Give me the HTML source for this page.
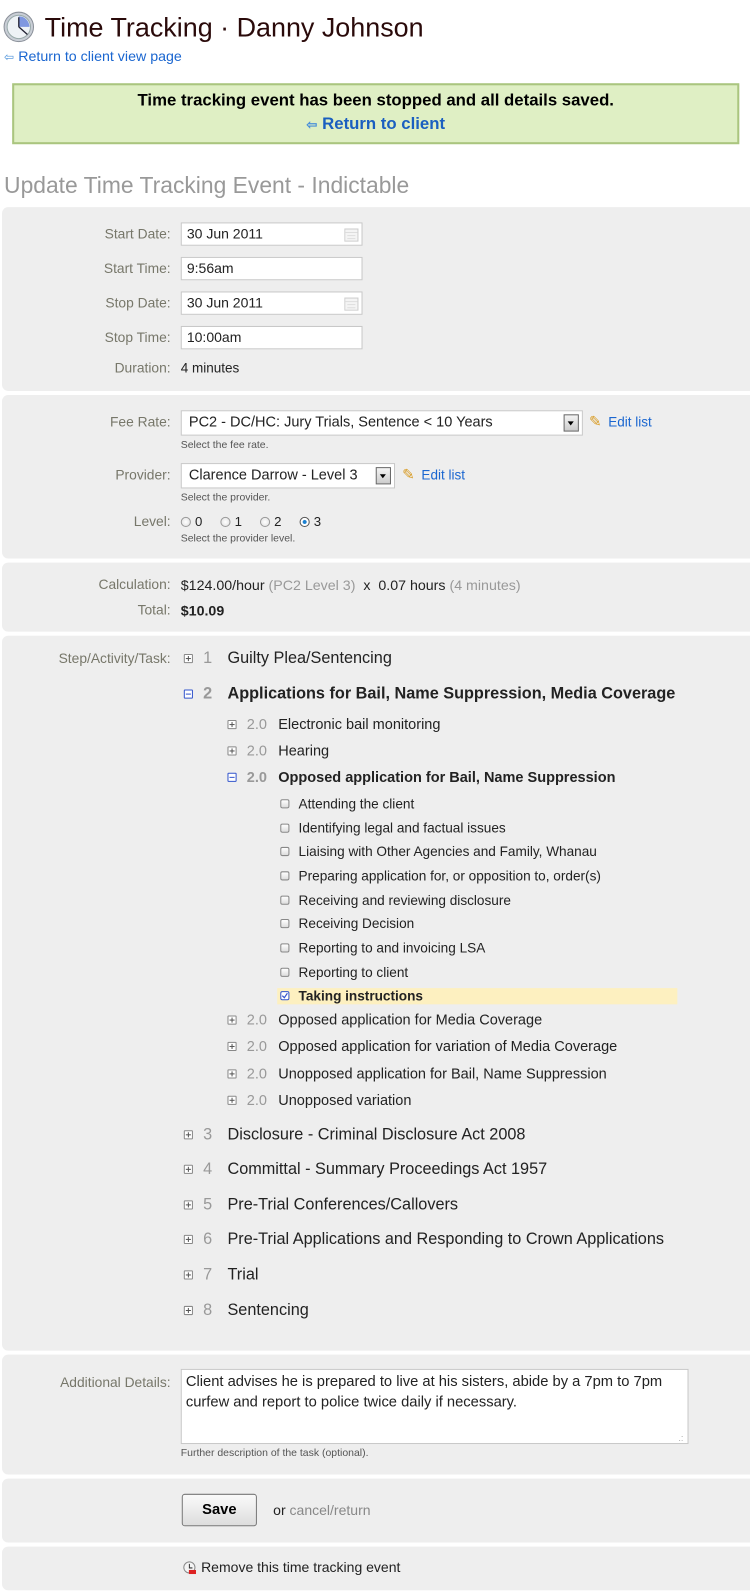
<!DOCTYPE html>
<html><head><meta charset="utf-8">
<style>
html,body{margin:0;padding:0;background:#fff;width:750px;height:1592px;overflow:hidden}
#w{position:absolute;left:0;top:0;width:739px;height:1568px;transform:scale(1.0155);transform-origin:0 0;font-family:"Liberation Sans",Arial,sans-serif;font-size:13px;color:#222}
.a{position:absolute;white-space:nowrap;line-height:20px}
.p{position:absolute;left:2px;width:760px;background:#eeeeee;border-radius:6px}
.lab{position:absolute;right:571px;color:#77776a;line-height:20px;white-space:nowrap;text-align:right;font-size:13.6px}
.inp{position:absolute;left:178px;width:179px;height:23px;background:#fff;border:1px solid #c8c8c8;box-sizing:border-box;padding-left:5px;line-height:21px;font-size:13.8px}
.help{position:absolute;left:178px;font-size:10.3px;color:#555;line-height:12px}
.sel{position:absolute;left:178px;height:25px;background:#fff;border:1px solid #c8c8c8;box-sizing:border-box;padding-left:7px;line-height:23px;font-size:14.3px}
.dd{position:absolute;right:3px;top:3px;width:13px;height:15px;border:1px solid #666;background:linear-gradient(#f4f4f4,#ccc)}
.dd:after{content:"";position:absolute;left:3px;top:6px;border-left:3.5px solid transparent;border-right:3.5px solid transparent;border-top:4px solid #000}
.link{color:#1a66d0}
.pl,.mi{position:absolute;width:7px;height:7px;border:1px solid #888;border-radius:1px;background:#fff}
.pl:before,.mi:before{content:"";position:absolute;left:1px;top:3px;width:5px;height:1px;background:#555}
.pl:after{content:"";position:absolute;left:3px;top:1px;width:1px;height:5px;background:#555}
.mi{border-color:#3355cc}.mi:before{background:#3355cc}
.cb{position:absolute;width:7px;height:7px;border:1px solid #888;border-radius:2px;background:linear-gradient(#fff,#ddd)}
.n{color:#999}
.r{position:absolute;width:10px;height:10px;border-radius:50%;border:1px solid #999;background:radial-gradient(#fff,#ddd);box-sizing:border-box}
.l1{font-size:16px}.l2{font-size:14.3px}.l3{font-size:13.4px}
</style></head><body><div id="w">
<svg style="position:absolute;left:3px;top:11px" width="31" height="31" viewBox="0 0 31 31"><circle cx="15.5" cy="15.5" r="14.5" fill="#c9ced6" stroke="#8a9099"/><circle cx="15.5" cy="15.5" r="11.5" fill="#eef2f6" stroke="#9aa"/><path d="M15.5 15.5 L15.5 5 A10.5 10.5 0 0 1 26 15.5 Z" fill="#7f97e0"/><path d="M15.5 15.5 L15.5 6 M15.5 15.5 L24 23" stroke="#223" stroke-width="1.3"/></svg>
<div class="a" style="left:44px;top:10px;font-size:26.5px;line-height:34px;color:#2a0a0a">Time Tracking · Danny Johnson</div>
<div class="a" style="left:4px;top:45px;font-size:14px"><span style="color:#4a90d9;font-size:12px">⇦</span> <span class="link">Return to client view page</span></div>
<div style="position:absolute;left:12px;top:82px;width:716px;height:60px;box-sizing:border-box;border:2px solid #aac57f;background:#dfefc4"></div>
<div class="a" style="left:12px;width:716px;text-align:center;top:89px;font-weight:bold;font-size:16.5px;color:#000">Time tracking event has been stopped and all details saved.</div>
<div class="a" style="left:12px;width:716px;text-align:center;top:112px;font-weight:bold;font-size:16.5px;color:#1a5fc0"><span style="color:#4a90d9;font-size:13px">⇦</span> Return to client</div>
<div class="a" style="left:4px;top:170px;font-size:22.5px;line-height:26px;color:#999">Update Time Tracking Event - Indictable</div>

<div class="p" style="top:204px;height:181px"></div>
<div class="p" style="top:389px;height:161px"></div>
<div class="p" style="top:554px;height:68px"></div>
<div class="p" style="top:626px;height:704px"></div>
<div class="p" style="top:1334px;height:118px"></div>
<div class="p" style="top:1456px;height:63px"></div>
<div class="p" style="top:1523px;height:43px"></div>

<div class="lab" style="top:221px">Start Date:</div><div class="inp" style="top:219px">30 Jun 2011<svg style="position:absolute;right:3px;top:3px" width="14" height="15"><rect x="0.5" y="2.5" width="13" height="12" fill="#f4f4f4" stroke="#ccc"/><path d="M1 6h12M3 9h8M3 12h8" stroke="#ddd"/></svg></div>
<div class="lab" style="top:255px">Start Time:</div><div class="inp" style="top:253px">9:56am</div>
<div class="lab" style="top:289px">Stop Date:</div><div class="inp" style="top:287px">30 Jun 2011<svg style="position:absolute;right:3px;top:3px" width="14" height="15"><rect x="0.5" y="2.5" width="13" height="12" fill="#f4f4f4" stroke="#ccc"/><path d="M1 6h12M3 9h8M3 12h8" stroke="#ddd"/></svg></div>
<div class="lab" style="top:323px">Stop Time:</div><div class="inp" style="top:321px">10:00am</div>
<div class="lab" style="top:353px">Duration:</div><div class="a" style="left:178px;top:353px;font-size:13.3px">4 minutes</div>

<div class="lab" style="top:406px">Fee Rate:</div>
<div class="sel" style="top:404px;width:396px">PC2 - DC/HC: Jury Trials, Sentence &lt; 10 Years<div class="dd"></div></div>
<div class="a" style="left:580px;top:406px;font-size:15px;color:#d89a20">✎</div><div class="a link" style="left:599px;top:406px;font-size:13.3px">Edit list</div>
<div class="help" style="top:433px">Select the fee rate.</div>
<div class="lab" style="top:458px">Provider:</div>
<div class="sel" style="top:456px;width:211px">Clarence Darrow - Level 3<div class="dd"></div></div>
<div class="a" style="left:396px;top:458px;font-size:15px;color:#d89a20">✎</div><div class="a link" style="left:415px;top:458px;font-size:13.3px">Edit list</div>
<div class="help" style="top:485px">Select the provider.</div>
<div class="lab" style="top:504px">Level:</div>
<div class="r" style="left:178px;top:509px"></div><div class="a" style="left:192px;top:504px">0</div>
<div class="r" style="left:217px;top:509px"></div><div class="a" style="left:231px;top:504px">1</div>
<div class="r" style="left:256px;top:509px"></div><div class="a" style="left:270px;top:504px">2</div>
<div class="r" style="left:295px;top:509px;border-color:#555;background:radial-gradient(#1a80d0 30%,#fff 40%)"></div><div class="a" style="left:309px;top:504px">3</div>
<div class="help" style="top:525px">Select the provider level.</div>

<div class="lab" style="top:566px">Calculation:</div><div class="a" style="left:178px;top:566px;font-size:14px">$124.00/hour <span class="n">(PC2 Level 3)</span>&nbsp; x&nbsp; 0.07 hours <span class="n">(4 minutes)</span></div>
<div class="lab" style="top:591px">Total:</div><div class="a" style="left:178px;top:591px;font-weight:bold;font-size:14px">$10.09</div>

<div class="lab" style="top:639px">Step/Activity/Task:</div>
<div class="pl" style="left:181px;top:644px"></div><div class="a l1 n" style="left:200px;top:639px">1</div><div class="a l1" style="left:224px;top:639px">Guilty Plea/Sentencing</div>
<div class="mi" style="left:181px;top:679px"></div><div class="a l1 n" style="left:200px;top:674px;font-weight:bold">2</div><div class="a l1" style="left:224px;top:674px;font-weight:bold">Applications for Bail, Name Suppression, Media Coverage</div>
<div class="pl" style="left:224px;top:709px"></div><div class="a l2 n" style="left:243px;top:704px">2.0</div><div class="a l2" style="left:274px;top:704px">Electronic bail monitoring</div>
<div class="pl" style="left:224px;top:735px"></div><div class="a l2 n" style="left:243px;top:730px">2.0</div><div class="a l2" style="left:274px;top:730px">Hearing</div>
<div class="mi" style="left:224px;top:761px"></div><div class="a l2 n" style="left:243px;top:756px;font-weight:bold">2.0</div><div class="a l2" style="left:274px;top:756px;font-weight:bold">Opposed application for Bail, Name Suppression</div>
<div style="position:absolute;left:273px;top:973px;width:394px;height:16px;background:#fdf0c0"></div>
<div class="cb" style="left:276px;top:787px"></div><div class="a l3" style="left:294px;top:782px">Attending the client</div>
<div class="cb" style="left:276px;top:811px"></div><div class="a l3" style="left:294px;top:806px">Identifying legal and factual issues</div>
<div class="cb" style="left:276px;top:834px"></div><div class="a l3" style="left:294px;top:829px">Liaising with Other Agencies and Family, Whanau</div>
<div class="cb" style="left:276px;top:858px"></div><div class="a l3" style="left:294px;top:853px">Preparing application for, or opposition to, order(s)</div>
<div class="cb" style="left:276px;top:882px"></div><div class="a l3" style="left:294px;top:877px">Receiving and reviewing disclosure</div>
<div class="cb" style="left:276px;top:905px"></div><div class="a l3" style="left:294px;top:900px">Receiving Decision</div>
<div class="cb" style="left:276px;top:929px"></div><div class="a l3" style="left:294px;top:924px">Reporting to and invoicing LSA</div>
<div class="cb" style="left:276px;top:953px"></div><div class="a l3" style="left:294px;top:948px">Reporting to client</div>
<div class="cb" style="left:276px;top:976px;border-color:#3355cc;background:#fff"><svg style="position:absolute;left:0;top:0" width="7" height="7"><path d="M1 3.5l2 2 3-4.5" stroke="#3355cc" fill="none" stroke-width="1.2"/></svg></div><div class="a l3" style="left:294px;top:971px;font-weight:bold">Taking instructions</div>
<div class="pl" style="left:224px;top:1000px"></div><div class="a l2 n" style="left:243px;top:995px">2.0</div><div class="a l2" style="left:274px;top:995px">Opposed application for Media Coverage</div>
<div class="pl" style="left:224px;top:1026px"></div><div class="a l2 n" style="left:243px;top:1021px">2.0</div><div class="a l2" style="left:274px;top:1021px">Opposed application for variation of Media Coverage</div>
<div class="pl" style="left:224px;top:1053px"></div><div class="a l2 n" style="left:243px;top:1048px">2.0</div><div class="a l2" style="left:274px;top:1048px">Unopposed application for Bail, Name Suppression</div>
<div class="pl" style="left:224px;top:1079px"></div><div class="a l2 n" style="left:243px;top:1074px">2.0</div><div class="a l2" style="left:274px;top:1074px">Unopposed variation</div>
<div class="pl" style="left:181px;top:1113px"></div><div class="a l1 n" style="left:200px;top:1108px">3</div><div class="a l1" style="left:224px;top:1108px">Disclosure - Criminal Disclosure Act 2008</div>
<div class="pl" style="left:181px;top:1147px"></div><div class="a l1 n" style="left:200px;top:1142px">4</div><div class="a l1" style="left:224px;top:1142px">Committal - Summary Proceedings Act 1957</div>
<div class="pl" style="left:181px;top:1182px"></div><div class="a l1 n" style="left:200px;top:1177px">5</div><div class="a l1" style="left:224px;top:1177px">Pre-Trial Conferences/Callovers</div>
<div class="pl" style="left:181px;top:1216px"></div><div class="a l1 n" style="left:200px;top:1211px">6</div><div class="a l1" style="left:224px;top:1211px">Pre-Trial Applications and Responding to Crown Applications</div>
<div class="pl" style="left:181px;top:1251px"></div><div class="a l1 n" style="left:200px;top:1246px">7</div><div class="a l1" style="left:224px;top:1246px">Trial</div>
<div class="pl" style="left:181px;top:1286px"></div><div class="a l1 n" style="left:200px;top:1281px">8</div><div class="a l1" style="left:224px;top:1281px">Sentencing</div>

<div class="lab" style="top:1352px">Additional Details:</div>
<div style="position:absolute;left:178px;top:1348px;width:500px;height:74px;box-sizing:border-box;background:#fff;border:1px solid #c8c8c8;padding:2px 4px;font-size:14.5px;line-height:20px">Client advises he is prepared to live at his sisters, abide by a 7pm to 7pm curfew and report to police twice daily if necessary.<span style="position:absolute;right:4px;bottom:0;color:#aaa;font-size:9px;line-height:10px">.:</span></div>
<div class="help" style="top:1426px">Further description of the task (optional).</div>

<div style="position:absolute;left:179px;top:1471px;width:74px;height:32px;box-sizing:border-box;border:1px solid #777;border-radius:3px;background:linear-gradient(#fafafa,#ddd);text-align:center;line-height:30px;font-weight:bold;font-size:14.5px;color:#000">Save</div>
<div class="a" style="left:269px;top:1478px;font-size:13.8px">or <span style="color:#888">cancel/return</span></div>

<svg style="position:absolute;left:180px;top:1537px" width="14" height="14"><circle cx="6.5" cy="6.5" r="5.5" fill="#f4f4f4" stroke="#888"/><path d="M6.5 3v4h3" stroke="#333" fill="none"/><rect x="6" y="9" width="7" height="4" fill="#d22"/></svg>
<div class="a" style="left:198px;top:1534px;font-size:13.8px">Remove this time tracking event</div>
</div></body></html>
